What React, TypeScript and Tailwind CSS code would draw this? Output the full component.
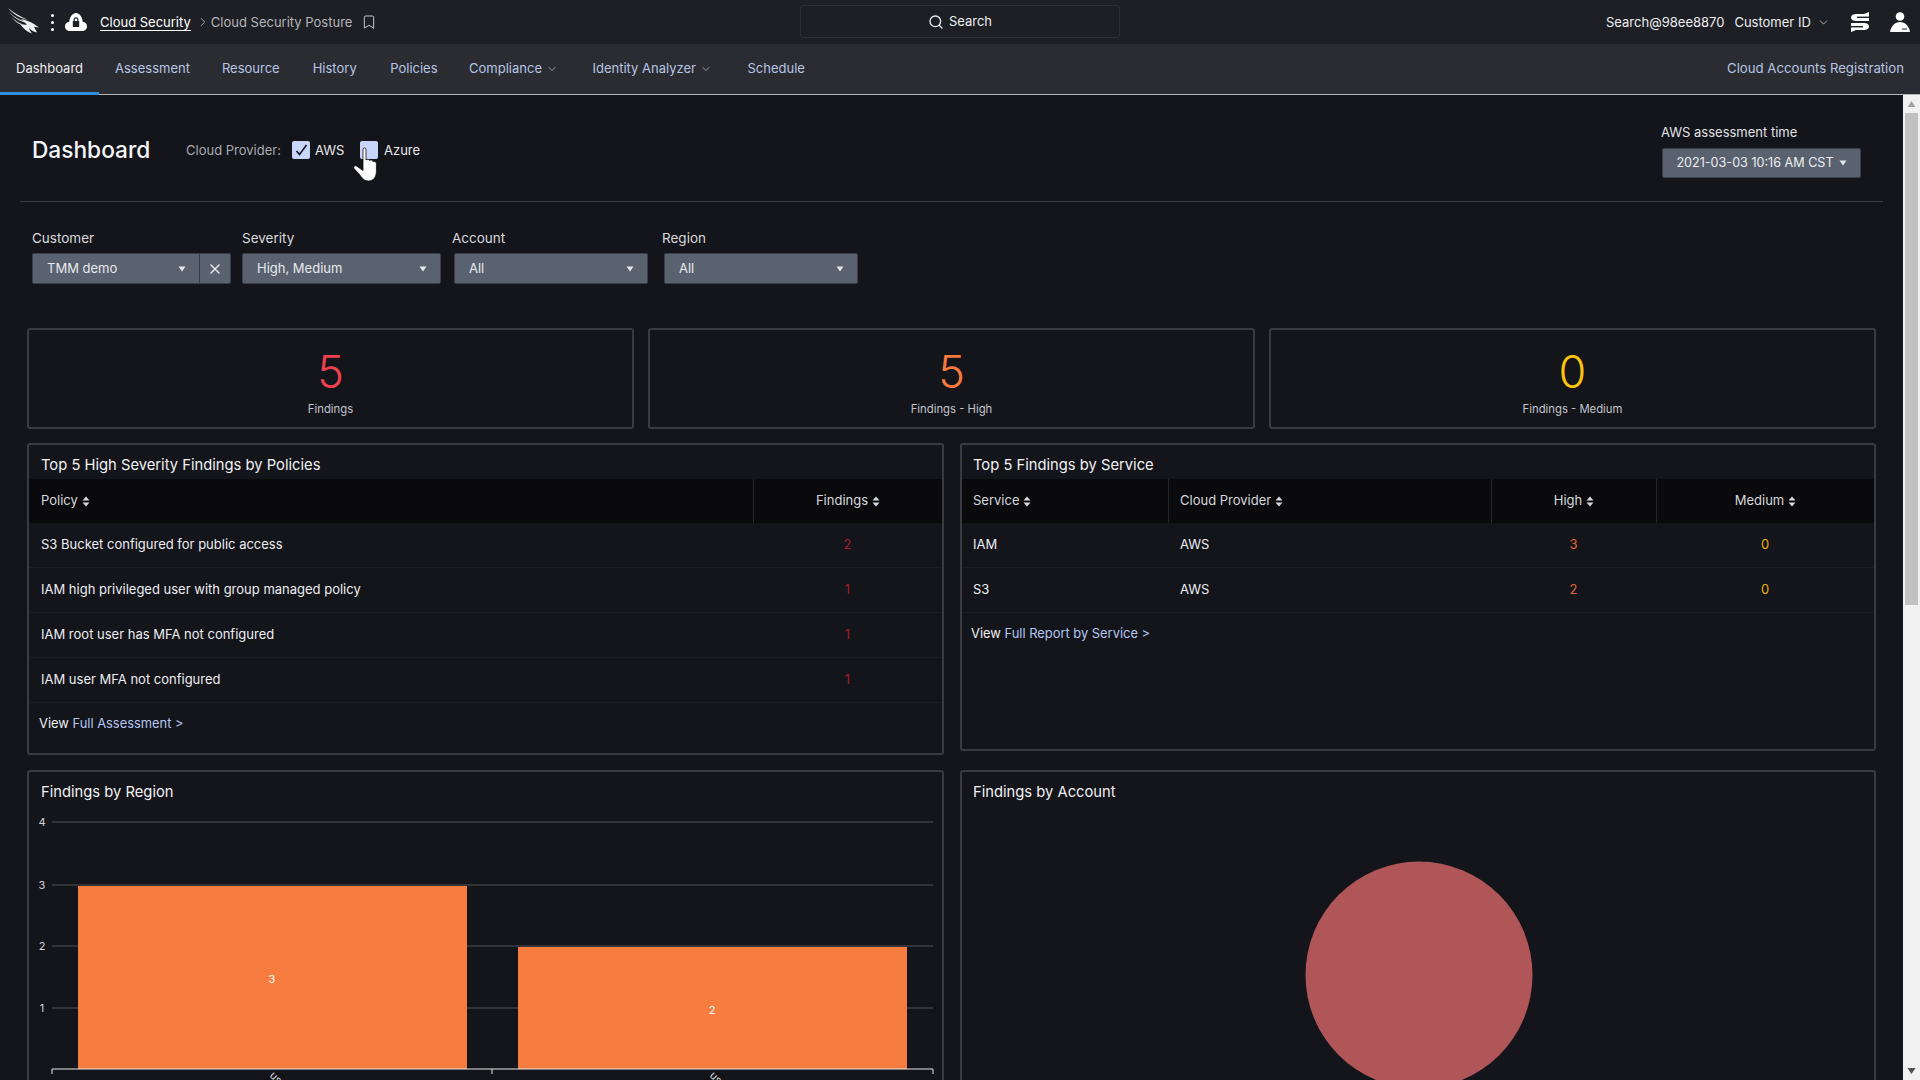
import React from "react";
import { ChevronDown, ChevronRight, Search, Bookmark, X } from "lucide-react";

function Sort() {
  return (
    <svg width="8" height="11" viewBox="0 0 8 11" className="ml-[4px] inline-block">
      <path d="M4 0.5 L7.5 4.5 H0.5 Z M4 10.5 L7.5 6.5 H0.5 Z" fill="#d8d9de" />
    </svg>
  );
}

function Caret({ c = "#e5e7eb" }: { c?: string }) {
  return (
    <svg width="8" height="6" viewBox="0 0 8 6">
      <path d="M0.5 0.5 H7.5 L4 5.5 Z" fill={c} />
    </svg>
  );
}

function Logo() {
  return (
    <svg width="32" height="26" viewBox="0 0 32 26" className="absolute left-[8px] top-[8px]">
      <path d="M0 0 C6 5 12 8 20 12 C12 10 6 7 0 0 Z M1 4 C6 9 12 12 19 14.5 C12 14 6 10 1 4 Z M3 8.5 C7 13 12 15.5 17 17 C11 17 7 13.5 3 8.5 Z" fill="#e4e5e8" />
      <path d="M13 11 C18 12 23 14 26 16 L31 19.5 L26 18.8 C27 21 28 22 29 24.5 C25 23.5 23 22 21 20 C21.5 22 22.5 23.5 24 25.5 C19 24 15 20 12 16 C15 17 17 17 19 16.5 C17 14.5 15 13 13 11 Z" fill="#eff0f2" />
    </svg>
  );
}

function CloudLock() {
  return (
    <svg width="22" height="18" viewBox="0 0 22 18" className="absolute left-[65px] top-[13px]">
      <path d="M5 18 C2 18 0 16 0 13.4 C0 10.8 1.8 9 4.2 8.8 C4.8 3.8 7.5 0 11 0 C14.5 0 17.2 3.8 17.8 8.8 C20.2 9 22 10.8 22 13.4 C22 16 20 18 17 18 Z" fill="#fff" />
      <rect x="7.8" y="8" width="6.4" height="6" rx="0.6" fill="#1e1f24" />
      <path d="M9.2 8.5 V6.6 A1.8 1.8 0 0 1 12.8 6.6 V8.5" fill="none" stroke="#1e1f24" strokeWidth="1.2" />
    </svg>
  );
}

function Hand() {
  return (
    <svg width="25" height="35" viewBox="0 0 25 35" className="absolute left-[353px] top-[52px]">
      <path d="M10 2 C10 0.6 13 0.6 13 2 V13 C14 12 16 12 16.5 13.5 C18 12.6 19.6 13 20 14.6 C21.5 14 23.4 14.6 23.4 16.6 V24 C23.4 30 20.5 34 15.5 34 C11 34 9 31 6.5 27.5 L1 21.5 C0 20 1.8 18 3.8 19.2 L10 23.5 Z" fill="#fff" stroke="#111" strokeWidth="0.8" />
    </svg>
  );
}

function FieldLabel({ children }: { children: React.ReactNode }) {
  return <div className="h-[20px] text-[13.5px] leading-[20px] text-[#d9dade]">{children}</div>;
}

function Select({ label, className }: { label: string; className: string }) {
  return (
    <div className={`flex h-[31px] items-center justify-between rounded-[2px] border border-[#3a3f49] bg-[#5a6270] pl-[14px] pr-[13px] text-[13px] text-[#e7e9ee] ${className}`}>
      <span>{label}</span>
      <Caret />
    </div>
  );
}

function Card({ n, label, color }: { n: string; label: string; color: string }) {
  return (
    <div className="relative h-[101px] rounded-[3px] border-2 border-[#3a3b42]">
      <div className={`absolute left-0 right-0 top-[15px] text-center text-[45px] font-light leading-[54px] ${color}`}>{n}</div>
      <div className="absolute left-0 right-0 top-[70px] text-center text-[11.3px] leading-[18px] text-[#c3c5cb]">{label}</div>
    </div>
  );
}

function Title({ children, left = "pl-[11px]" }: { children: React.ReactNode; left?: string }) {
  return <div className={`h-[34px] pt-[8px] text-[14.75px] leading-[24px] text-[#f0f1f3] ${left}`}>{children}</div>;
}

function Th({ children, center, left = "pl-[11px]" }: { children: React.ReactNode; center?: boolean; left?: string }) {
  return (
    <div className={`flex h-[44px] items-center border-l border-[#26272d] text-[13px] text-[#d6d8dd] first:border-l-0 ${center ? "justify-center" : left}`}>
      <span>{children}</span>
      <Sort />
    </div>
  );
}

function Row({ label, n }: { label: string; n: string }) {
  return (
    <div className="grid h-[45px] grid-cols-[724px_1fr] items-center border-b border-[#1d1e24] text-[13px] text-[#eceef1]">
      <div className="pl-[12px]">{label}</div>
      <div className="text-center text-[#a51d24]">{n}</div>
    </div>
  );
}

function Cell({ children, color }: { children: React.ReactNode; color: string }) {
  return <div className={`text-center ${color}`}>{children}</div>;
}

function Chart() {
  return (
    <svg width="917" height="320" viewBox="0 0 917 320" className="absolute left-[-2px] top-[-2px]">
      {[
        [52, "4"],
        [115, "3"],
        [176, "2"],
        [238, "1"],
      ].map(([y, t]) => (
        <g key={t as string}>
          <line x1="25" x2="906" y1={y as number} y2={y as number} stroke="#3c3d44" strokeWidth="1.3" />
          <text x="15" y={(y as number) + 4} fill="#d3d5da" fontSize="11" textAnchor="middle" fontFamily="Inter">{t}</text>
        </g>
      ))}
      <rect x="51" y="116" width="389" height="183" fill="#f77c40" />
      <rect x="491" y="177" width="389" height="122" fill="#f77c40" />
      <text x="245" y="213" fill="#fff" fontSize="11" textAnchor="middle" fontFamily="Inter">3</text>
      <text x="685" y="244" fill="#fff" fontSize="11" textAnchor="middle" fontFamily="Inter">2</text>
      <path d="M25 304 V299 H906 V304 M465 299 V304" fill="none" stroke="#e8e8e8" strokeWidth="1" />
      <text transform="translate(242 306) rotate(45)" fill="#d3d5da" fontSize="11" fontFamily="Inter">us-east-1</text>
      <text transform="translate(682 306) rotate(45)" fill="#d3d5da" fontSize="11" fontFamily="Inter">us-west-2</text>
    </svg>
  );
}

export default function App() {
  return (
    <div className="flex h-screen w-[1920px] flex-col overflow-hidden bg-[#14141b] font-[Inter,sans-serif]">
      <header className="relative h-[44px] shrink-0 bg-[#1e1f24]">
        <Logo />
        <div className="absolute left-[51px] top-[14px] flex flex-col gap-[4.5px]">
          <span className="h-[2.5px] w-[2.5px] rounded-full bg-white" />
          <span className="h-[2.5px] w-[2.5px] rounded-full bg-white" />
          <span className="h-[2.5px] w-[2.5px] rounded-full bg-white" />
        </div>
        <CloudLock />
        <div className="absolute left-[100px] top-0 flex h-[44px] items-center text-[13px]">
          <span className="pt-[1px] text-white underline underline-offset-[3px]">Cloud Security</span>
          <ChevronRight className="ml-[5px] mr-[1px] h-[14px] w-[14px] text-[#bdbec3]" strokeWidth={1.5} />
          <span className="pt-[1px] text-[#b3b5ba]">Cloud Security Posture</span>
          <Bookmark className="ml-[9px] h-[16px] w-[16px] text-[#c8c9cd]" strokeWidth={1.5} />
        </div>
        <div className="absolute left-[800px] top-[5px] flex h-[33px] w-[320px] items-center justify-center gap-[5px] rounded-[3px] border border-[#2d2e34] text-[13px] text-[#eceef1]">
          <Search className="h-[16px] w-[16px]" strokeWidth={2} />
          <span className="pt-[1px]">Search</span>
        </div>
        <div className="absolute left-[1606px] top-0 flex h-[44px] items-center text-[13px] text-[#eceef1]">
          <span className="pt-[1px]">Search@98ee8870</span>
          <span className="ml-[10px] pt-[1px]">Customer ID</span>
          <ChevronDown className="ml-[6px] h-[13px] w-[13px] text-[#c8c9cd]" strokeWidth={1.5} />
        </div>
        <svg width="18" height="20" viewBox="0 0 18 20" className="absolute left-[1851px] top-[12px]">
          <path d="M18 0 V9 H5 C2 9 0 7.5 0 5.5 C0 3.2 2 2 5 2 H13 Z" fill="#fff" />
          <rect x="6" y="4.6" width="12" height="1.4" fill="#1e1f24" />
          <path d="M0 20 V11 H13 C16 11 18 12.5 18 14.5 C18 16.8 16 18 13 18 H5 Z" fill="#fff" />
          <rect x="0" y="14" width="12" height="1.4" fill="#1e1f24" />
        </svg>
        <svg width="20" height="20" viewBox="0 0 20 20" className="absolute left-[1890px] top-[12px]">
          <circle cx="10" cy="4.5" r="4.3" fill="#fff" />
          <path d="M0 20 C1 14 5 10 10 10 C15 10 19 14 20 20 Z" fill="#fff" />
          <rect x="12" y="16.5" width="5" height="1" fill="#1e1f24" />
        </svg>
      </header>

      <nav className="flex h-[51px] shrink-0 items-center justify-between border-b border-[#b5b6ba] bg-[#2b2c31] text-[13px] text-[#b7c5e4]">
        <div className="flex h-full items-center">
          <div className="relative flex h-full w-[99px] items-center pl-[16px] text-[#eceef1]">
            Dashboard
            <span className="absolute bottom-[-1px] left-0 h-[3px] w-[99px] bg-[#2f8fdc]" />
          </div>
          <span className="ml-[16px]">Assessment</span>
          <span className="ml-[32px]">Resource</span>
          <span className="ml-[33px]">History</span>
          <span className="ml-[33.5px]">Policies</span>
          <span className="ml-[31.5px] flex items-center">Compliance<ChevronDown className="ml-[4px] h-[12px] w-[12px]" strokeWidth={1.5} /></span>
          <span className="ml-[34.5px] flex items-center">Identity Analyzer<ChevronDown className="ml-[4px] h-[12px] w-[12px]" strokeWidth={1.5} /></span>
          <span className="ml-[35.5px]">Schedule</span>
        </div>
        <span className="mr-[16px] text-[13.2px]">Cloud Accounts Registration</span>
      </nav>

      <main className="relative flex-1 overflow-hidden">
        <div className="mx-[20px] flex h-[107px] w-[1863px] items-start justify-between border-b border-[#3f4046]">
          <div className="relative ml-[12px] mt-[43px] flex h-[24px] items-center">
            <span className="w-[114px] pt-[1px] text-[22.7px] font-medium text-[#f5f6f8]">Dashboard</span>
            <span className="ml-[40px] w-[106px] pt-[1px] text-[13px] text-[#a9abb1]">Cloud Provider:</span>
            <span className="flex h-[18px] w-[18px] items-center justify-center rounded-[2px] bg-[#c9d6fb]">
              <svg width="13" height="12" viewBox="0 0 13 12">
                <path d="M1.5 7 L4.5 10.5 L11.5 1" fill="none" stroke="#14141b" strokeWidth="1.6" />
              </svg>
            </span>
            <span className="ml-[5px] w-[45px] pt-[1px] text-[13px] text-[#e8e9ec]">AWS</span>
            <span className="h-[18px] w-[18px] rounded-[2px] bg-[#c9d6fb]" />
            <span className="ml-[6px] pt-[1px] text-[13px] text-[#e8e9ec]">Azure</span>
          </div>
          <div className="mr-[22px] mt-[27px] w-[199px]">
            <div className="ml-[-1px] h-[20px] text-[13px] leading-[20px] text-[#e0e1e5]">AWS assessment time</div>
            <div className="mt-[6px] flex h-[30px] items-center justify-center gap-[5px] rounded-[2px] border border-[#3a3f49] bg-[#5a6270] text-[12.6px] text-[#eceef1]">
              2021-03-03 10:16 AM CST
              <Caret />
            </div>
          </div>
        </div>
        <Hand />

        <div className="ml-[32px] mt-[26px] flex">
          <div className="w-[199px]">
            <FieldLabel>Customer</FieldLabel>
            <div className="mt-[5px] flex h-[31px] rounded-[2px] border border-[#3a3f49] bg-[#5a6270] text-[13px] text-[#e7e9ee]">
              <div className="flex w-[167px] items-center justify-between border-r border-[#353a43] pl-[14px] pr-[13px]">
                <span>TMM demo</span>
                <Caret />
              </div>
              <div className="flex flex-1 items-center justify-center">
                <X className="h-[16px] w-[16px]" strokeWidth={2} />
              </div>
            </div>
          </div>
          <div className="ml-[11px] w-[199px]">
            <FieldLabel>Severity</FieldLabel>
            <Select label="High, Medium" className="mt-[5px] w-[199px]" />
          </div>
          <div className="ml-[11px] w-[196px]">
            <FieldLabel>Account</FieldLabel>
            <Select label="All" className="ml-[2px] mt-[5px] w-[194px]" />
          </div>
          <div className="ml-[14px] w-[196px]">
            <FieldLabel>Region</FieldLabel>
            <Select label="All" className="ml-[2px] mt-[5px] w-[194px]" />
          </div>
        </div>

        <div className="ml-[27px] mt-[44px] grid w-[1849px] grid-cols-[607px_607px_607px] gap-[14px]">
          <Card n="5" label="Findings" color="text-[#f0414e]" />
          <Card n="5" label="Findings - High" color="text-[#f57a3c]" />
          <Card n="0" label="Findings - Medium" color="text-[#fcc30b]" />
        </div>

        <div className="ml-[27px] mt-[14px] grid w-[1849px] grid-cols-[917px_916px] items-start gap-[16px]">
          <section className="h-[312px] rounded-[3px] border-2 border-[#3a3b42]">
            <Title left="pl-[12px]">Top 5 High Severity Findings by Policies</Title>
            <div className="grid grid-cols-[724px_1fr] bg-[#0a0a0d]">
              <Th left="pl-[12px]">Policy</Th>
              <Th center>Findings</Th>
            </div>
            <Row label="S3 Bucket configured for public access" n="2" />
            <Row label="IAM high privileged user with group managed policy" n="1" />
            <Row label="IAM root user has MFA not configured" n="1" />
            <Row label="IAM user MFA not configured" n="1" />
            <div className="pl-[10px] pt-[11px] text-[12.9px] text-[#eceef1]">
              View <span className="text-[#b3c6f0]">Full Assessment &gt;</span>
            </div>
          </section>
          <section className="h-[308px] rounded-[3px] border-2 border-[#3a3b42]">
            <Title>Top 5 Findings by Service</Title>
            <div className="grid grid-cols-[206px_323px_165px_1fr] bg-[#0a0a0d]">
              <Th>Service</Th>
              <Th>Cloud Provider</Th>
              <Th center>High</Th>
              <Th center>Medium</Th>
            </div>
            {[["IAM", "3"], ["S3", "2"]].map(([s, h]) => (
              <div key={s} className="grid h-[45px] grid-cols-[206px_323px_165px_1fr] items-center border-b border-[#1d1e24] text-[13px] text-[#eceef1]">
                <div className="pl-[11px]">{s}</div>
                <div className="pl-[12px]">AWS</div>
                <Cell color="text-[#e0653a]">{h}</Cell>
                <Cell color="text-[#eab308]">0</Cell>
              </div>
            ))}
            <div className="pl-[9px] pt-[11px] text-[12.9px] text-[#eceef1]">
              View <span className="text-[#b3c6f0]">Full Report by Service &gt;</span>
            </div>
          </section>
        </div>

        <div className="ml-[27px] mt-[15px] grid w-[1849px] grid-cols-[917px_916px] gap-[16px]">
          <section className="relative h-[340px] rounded-[3px] border-2 border-[#3a3b42]">
            <Title left="pl-[12px]">Findings by Region</Title>
            <Chart />
          </section>
          <section className="relative h-[340px] rounded-[3px] border-2 border-[#3a3b42]">
            <Title>Findings by Account</Title>
            <svg width="228" height="228" viewBox="0 0 228 228" className="absolute left-[343px] top-[89px]">
              <circle cx="114" cy="114" r="113.5" fill="#b05558" />
            </svg>
          </section>
        </div>

        <div className="absolute bottom-0 left-[1903px] top-0 w-[17px] bg-[#f1f1f1]">
          <svg width="17" height="17" viewBox="0 0 17 17" className="absolute left-0 top-0">
            <path d="M8.5 6 L12.5 12 H4.5 Z" fill="#a3a3a3" />
          </svg>
          <div className="absolute left-[2px] right-[2px] top-[18px] h-[492px] bg-[#c1c1c1]" />
          <svg width="17" height="17" viewBox="0 0 17 17" className="absolute bottom-0 left-0">
            <path d="M4.5 5 H12.5 L8.5 11 Z" fill="#505050" />
          </svg>
        </div>
      </main>
    </div>
  );
}
